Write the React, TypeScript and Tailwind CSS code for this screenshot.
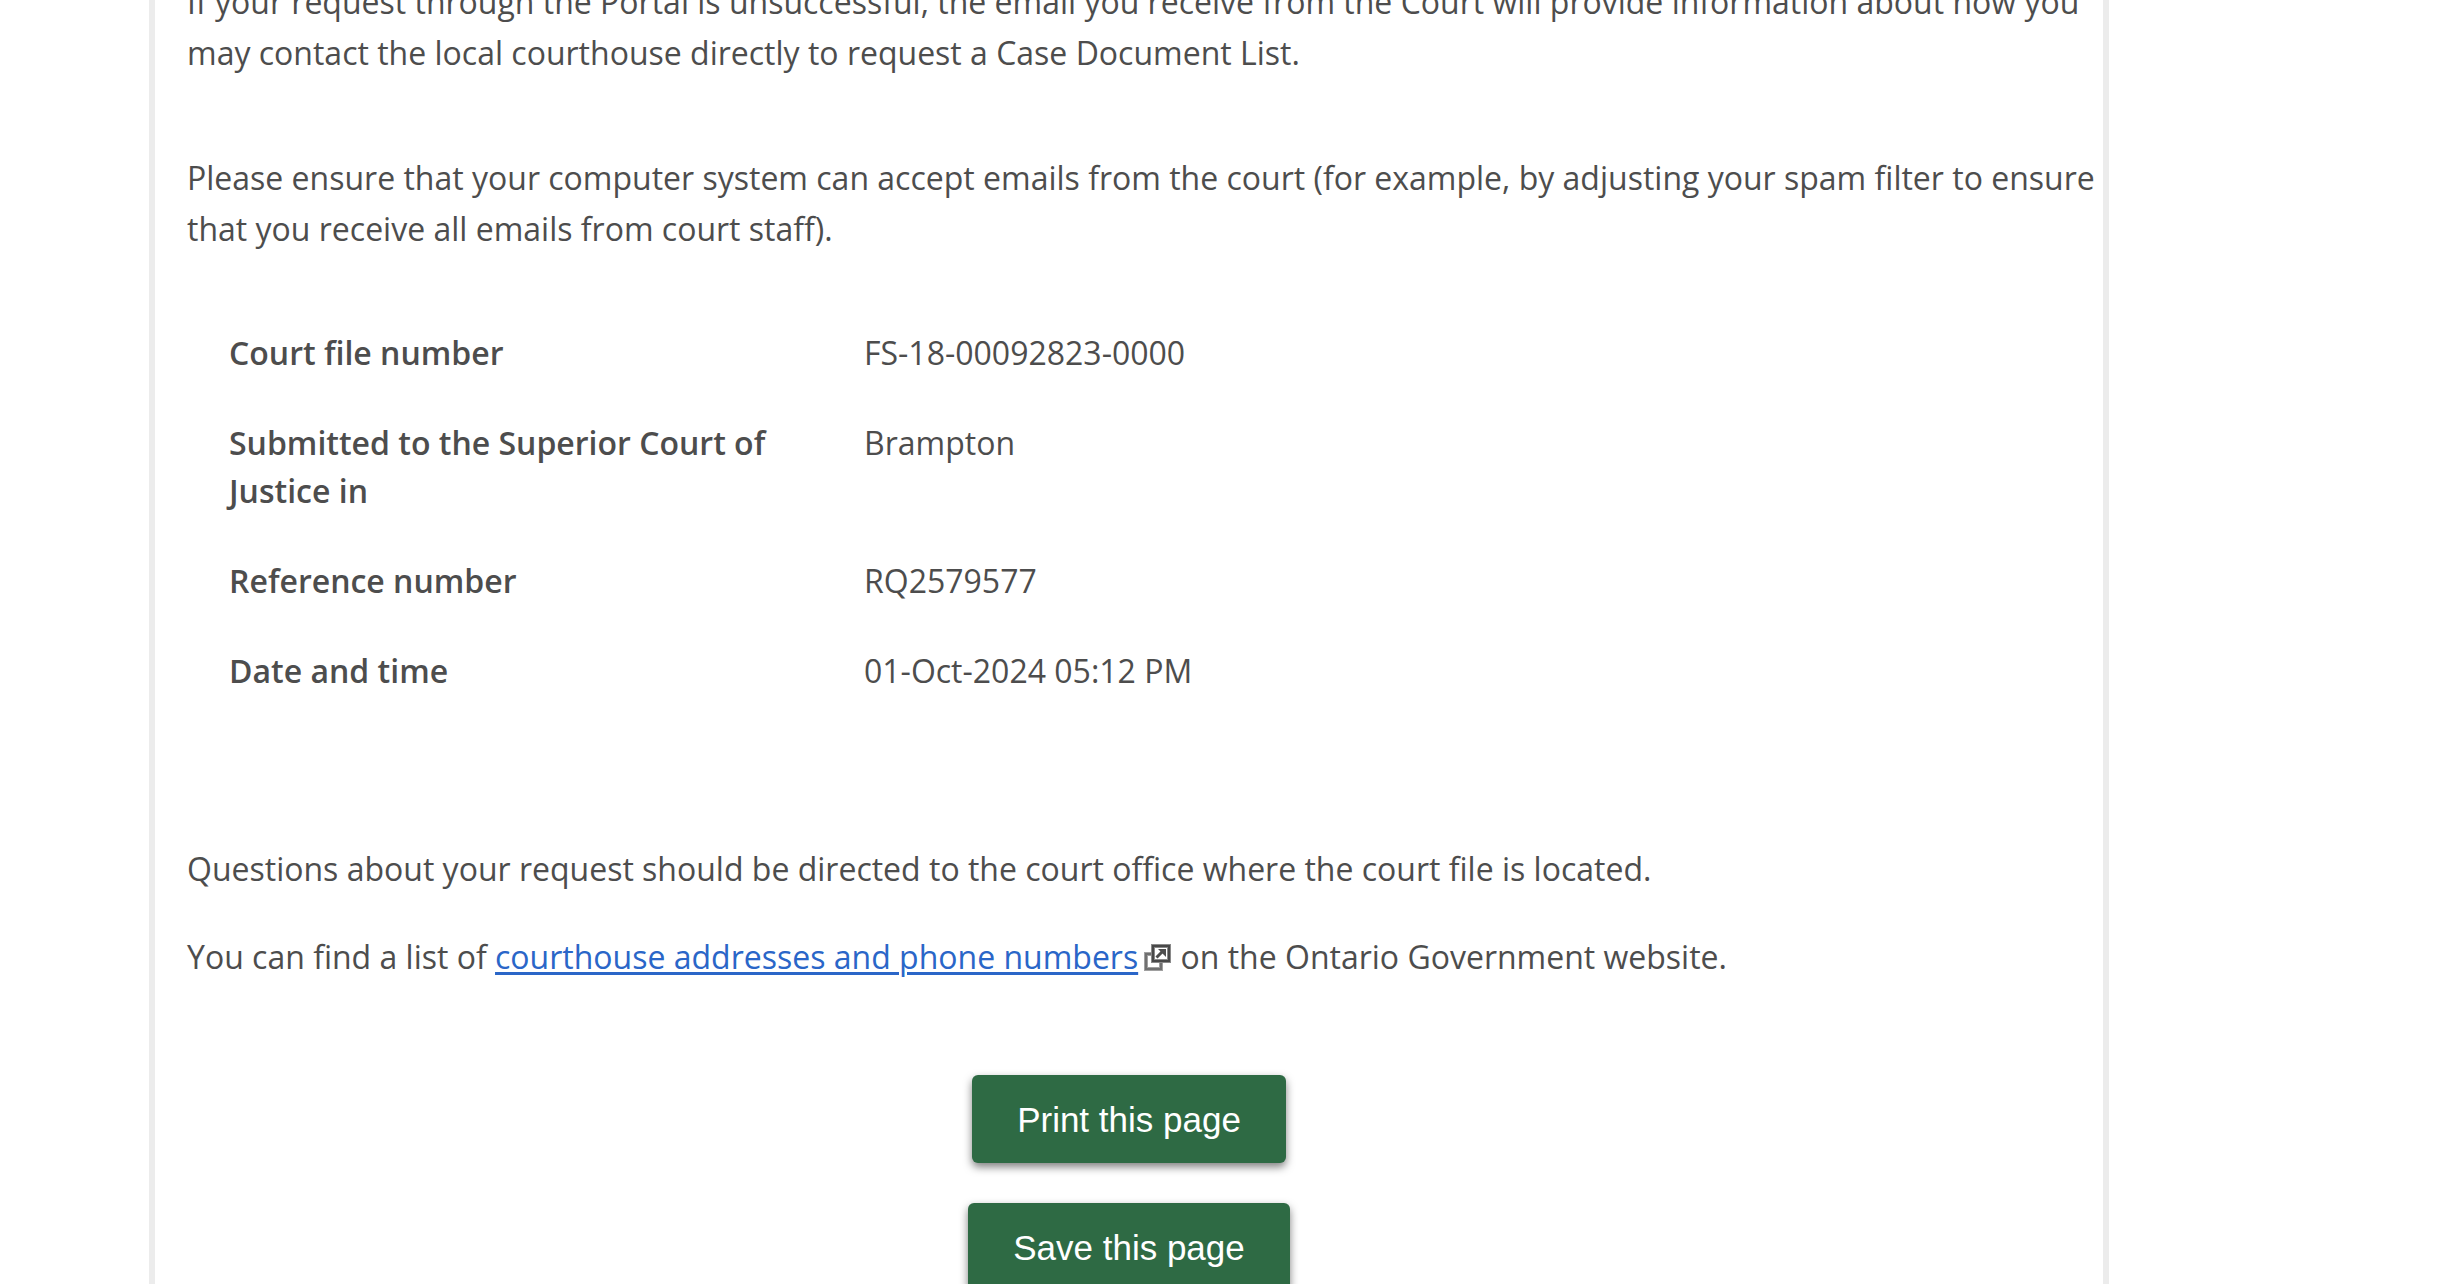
import React from "react";

const rows = [
  { label: "Court file number", value: "FS-18-00092823-0000" },
  { label: "Submitted to the Superior Court of Justice in", value: "Brampton" },
  { label: "Reference number", value: "RQ2579577" },
  { label: "Date and time", value: "01-Oct-2024 05:12 PM" },
];

const buttons = ["Print this page", "Save this page"];

function ExternalIcon() {
  return (
    <svg className="ml-1.5 inline-block size-7 align-[-2px]" viewBox="0 0 28 28" fill="none" aria-hidden="true">
      <path d="M9 11H2v15h15v-8" stroke="#a0a0a0" strokeWidth="4" />
      <path d="M9 11H2v15h15v-8" stroke="#707070" strokeWidth="2" />
      <path d="M9 3h16v15H9z" fill="#fff" stroke="#8a8a8a" strokeWidth="4" />
      <path d="M9 3h16v15H9z" stroke="#484848" strokeWidth="2" />
      <path d="M12.500 14.500l7-7" stroke="#4d4d4d" strokeWidth="3" />
      <path d="M14 6h8v8z" fill="#4d4d4d" />
    </svg>
  );
}

export default function App() {
  return (
    <div className="h-screen overflow-hidden bg-white font-['Open_Sans',sans-serif] text-[32px] leading-[51px] text-[#4d4d4d]">
      <main className="ml-[149px] mr-[337px] min-h-screen border-x-[6px] border-[#ececec] pl-8">
        <p className="-mt-6">
          If your request through the Portal is unsuccessful, the email you receive from the Court will provide information about how you may contact the local courthouse directly to request a Case Document List.
        </p>
        <p className="mt-[74px]">
          Please ensure that your computer system can accept emails from the court (for example, by adjusting your spam filter to ensure that you receive all emails from court staff).
        </p>
        <dl className="mt-[75px] flex flex-col gap-[42px] pl-[42px] leading-[48px]">
          {rows.map((r) => (
            <div key={r.label} className="flex">
              <dt className="w-[635px] shrink-0 pr-20 font-semibold">{r.label}</dt>
              <dd>{r.value}</dd>
            </div>
          ))}
        </dl>
        <p className="mt-[148px]">Questions about your request should be directed to the court office where the court file is located.</p>
        <p className="mt-[37px]">
          You can find a list of{" "}
          <a href="#courthouses" className="text-[#2a66c8] underline decoration-[3px] underline-offset-[3px]">courthouse addresses and phone numbers</a>
          <ExternalIcon /> on the Ontario Government website.
        </p>
        <div className="mt-[93px] flex flex-col items-center gap-10 pr-8 font-['Liberation_Sans',Arial,sans-serif]">
          {buttons.map((label) => (
            <button key={label} type="button" className="h-[88px] rounded-md bg-[#2e6a44] px-[45px] text-[35px] text-white shadow-[0_4px_8px_rgba(0,0,0,0.5)]">
              {label}
            </button>
          ))}
        </div>
      </main>
    </div>
  );
}
